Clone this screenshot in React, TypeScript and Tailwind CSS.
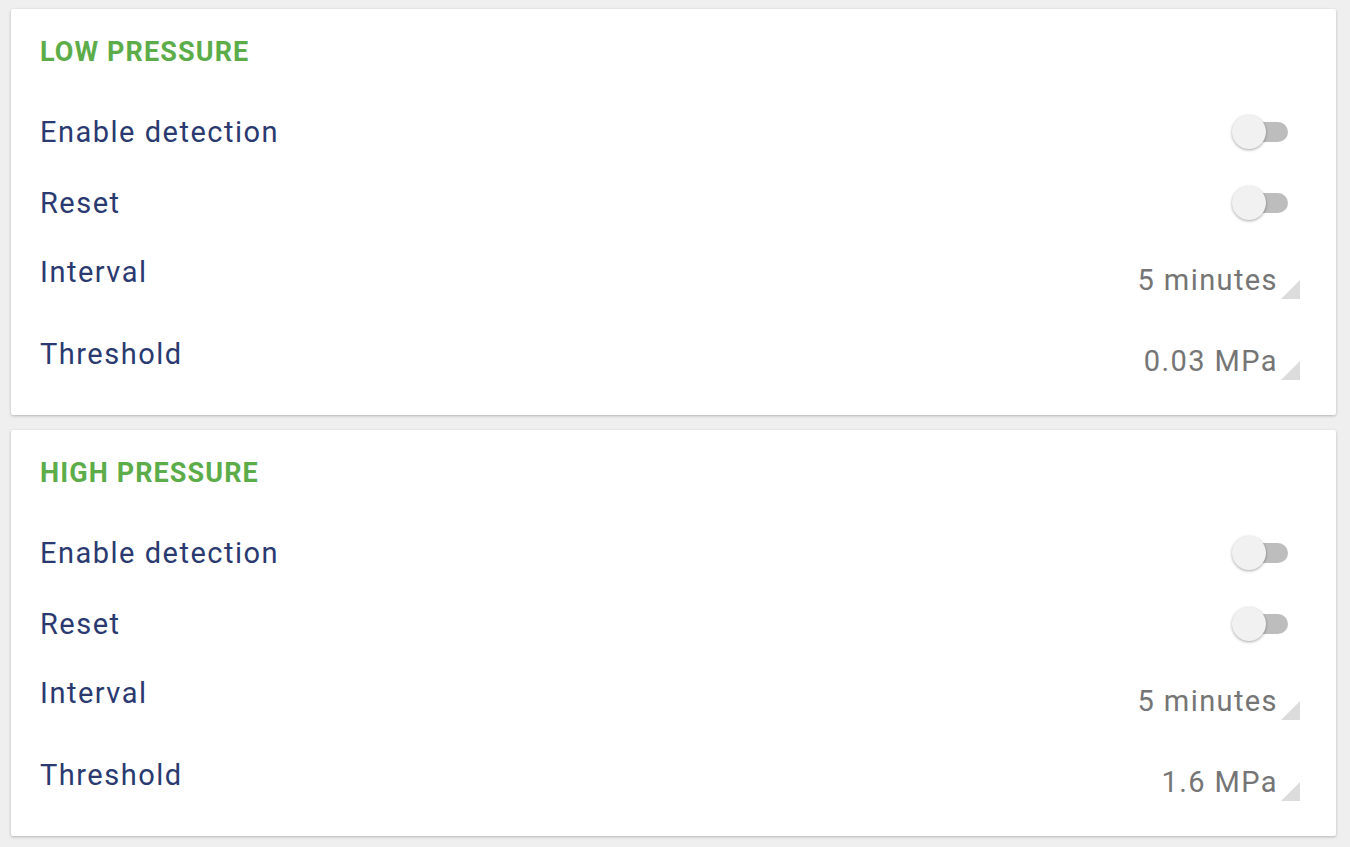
import React from "react";

function Toggle() {
  return (
    <div className="relative w-[58px] h-[36px] flex items-center">
      <div className="ml-[14px] w-[42px] h-[20px] rounded-full bg-[#bdbdbd]" />
      <div className="absolute left-0 top-[1px] w-[34px] h-[34px] rounded-full bg-[#f1f1f1] shadow-[0_1px_3px_rgba(0,0,0,0.35)]" />
    </div>
  );
}

function SelectValue({ value }: { value: string }) {
  return (
    <div className="flex items-end">
      <span className="text-[29px] leading-[32px] tracking-[1.4px] text-[#757575]">{value}</span>
      <svg width="20" height="20" viewBox="0 0 20 20" className="ml-[2px] mb-[-3px]">
        <polygon points="20,1 20,20 1,20" fill="#dcdcdc" />
      </svg>
    </div>
  );
}

const label = "text-[29px] leading-[32px] tracking-[1.5px] text-[#2a3a70]";

function Card({ title, threshold }: { title: string; threshold: string }) {
  return (
    <div className="bg-white ml-[11px] mr-[14px] rounded-[2px] shadow-[0_1px_3px_rgba(0,0,0,0.25)] pl-[29px] pr-[36px] pt-[27px] pb-[13px]">
      <div className="text-[27px] leading-[32px] tracking-[1.1px] font-bold text-[#5cad4a]">{title}</div>
      <div className="mt-[29px] h-[70px] flex items-center justify-between">
        <span className={label}>Enable detection</span>
        <div className="mr-[10px]"><Toggle /></div>
      </div>
      <div className="h-[71px] flex items-center justify-between">
        <span className={label}>Reset</span>
        <div className="mr-[10px]"><Toggle /></div>
      </div>
      <div className="h-[82px] flex items-start justify-between">
        <span className={"mt-[18px] " + label}>Interval</span>
        <div className="mt-[26px]"><SelectValue value="5 minutes" /></div>
      </div>
      <div className="h-[82px] flex items-start justify-between">
        <span className={"mt-[18px] " + label}>Threshold</span>
        <div className="mt-[25px]"><SelectValue value={threshold} /></div>
      </div>
    </div>
  );
}

export default function App() {
  return (
    <div className="w-[1350px] h-[847px] bg-[#efefef] pt-[9px] flex flex-col gap-[15px]" style={{ fontFamily: "Roboto, 'Noto Sans', sans-serif" }}>
      <Card title="LOW PRESSURE" threshold="0.03 MPa" />
      <Card title="HIGH PRESSURE" threshold="1.6 MPa" />
    </div>
  );
}
